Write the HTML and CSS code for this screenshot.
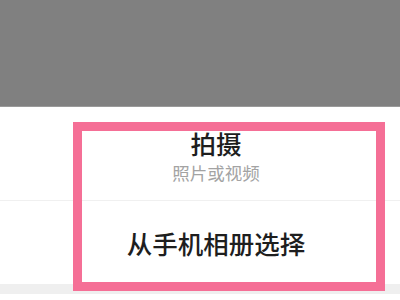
FILE: index.html
```html
<!DOCTYPE html>
<html lang="zh-CN">
<head>
    <meta charset="utf-8" />
    <title>拍摄</title>
    <meta name="viewport" content="width=device-width, initial-scale=1" />
    <link rel="stylesheet" href="styles.css">
</head>
<body>
<div class="mask"></div>
<div class="sheet">
    <div class="item first">
        <div class="title">拍摄</div>
        <div class="sub">照片或视频</div>
    </div>
    <div class="item second">
        <div class="title">从手机相册选择</div>
    </div>
    <div class="gap"></div>
    <div class="item cancel"></div>
</div>
<div class="mark"></div>
</body>
</html>
```
FILE: styles.css
```css
html, body {
    margin: 0; padding: 0;
    width: 400px; height: 300px; overflow: hidden;
    background-color: #fff;
    font-family: "Noto Sans CJK SC", "Noto Sans", sans-serif;
}
.mask {
    height: 106px; background-color: #808080;
    border-bottom: 1px solid #9a9a9a;
}
.sheet { background-color: #fff; }
.item {
    padding-left: 32px; text-align: center;
}
.item.first {
    padding-top: 21px; padding-bottom: 17px;
    border-bottom: 1px solid #f0f0f0;
}
.item.second { padding-top: 27px; padding-bottom: 26px; }
.title {
    font-size: 25.5px; line-height: 30px; font-weight: 500; color: #1e1e1e;
}
.sub {
    margin-top: 5px;
    font-size: 17.5px; line-height: 20px; color: #a3a3a3;
}
.gap { height: 10px; background-color: #efefef; }
.item.cancel { height: 6px; }
.mark {
    position: absolute; left: 73px; top: 122px;
    width: 294px; height: 151px;
    border: 9px solid #f56f96;
}
```
